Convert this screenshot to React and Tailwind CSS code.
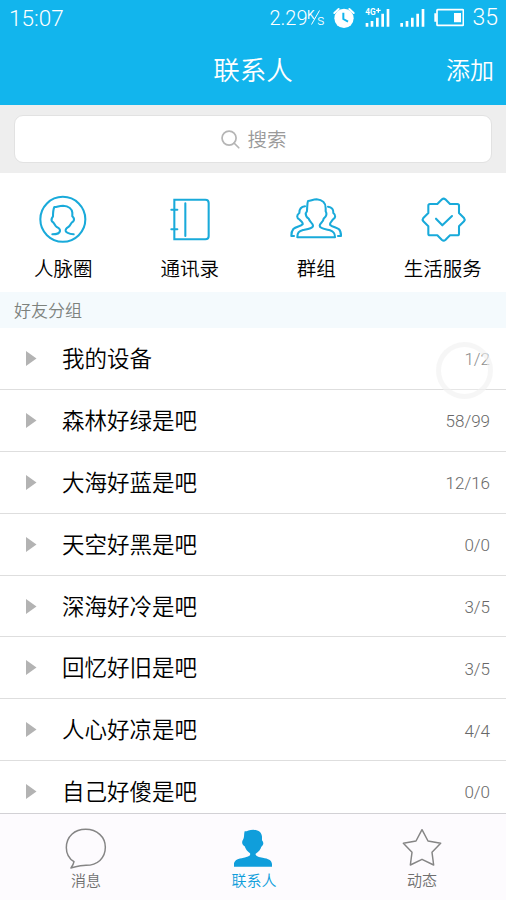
const groups = [
  { name: '我的设备', count: '1/2' },
  { name: '森林好绿是吧', count: '58/99' },
  { name: '大海好蓝是吧', count: '12/16' },
  { name: '天空好黑是吧', count: '0/0' },
  { name: '深海好冷是吧', count: '3/5' },
  { name: '回忆好旧是吧', count: '3/5' },
  { name: '人心好凉是吧', count: '4/4' },
  { name: '自己好傻是吧', count: '0/0' },
];

function StatusBar() {
  return (
    <div className="flex h-9 items-center pl-[9px] pr-[8px] font-[Roboto,sans-serif] font-light">
      <span className="text-[22.5px] leading-9">15:07</span>
      <span className="ml-auto text-[20px] leading-9">2.29</span>
      <svg className="mr-[7px]" width="18" height="36" viewBox="0 0 18 36" aria-hidden="true">
        <text x="0" y="18.5" fontSize="12" fontWeight="400" fill="#fff">K</text>
        <path d="M4.5 24.5L12.5 10.5" stroke="#fff" strokeWidth="1" />
        <text x="10" y="25" fontSize="15" fontWeight="300" fill="#fff">s</text>
      </svg>
      {/* Alarm */}
      <svg width="24" height="36" viewBox="123 0 72 108" fill="none">
        <circle cx="159" cy="55" r="29" fill="#fff" />
        <path d="M130 39L143 27M188 39L175 27" stroke="#fff" strokeWidth="6" strokeLinecap="round" />
        <path d="M157 38V57L171 65" stroke="#12b5ed" strokeWidth="6" />
      </svg>
      {/* Mobile data */}
      <svg className="ml-[9px]" width="26" height="36" viewBox="222 0 78 108" fill="#fff">
        <text x="223" y="46" fontSize="28" fontWeight="700" textLength="31" lengthAdjust="spacingAndGlyphs">4G</text>
        <path d="M255 29h5v-5h4v5h5v4h-5v5h-4v-5h-5z" />
        <path d="M224 69h8v11h-8zM239 63h8v17h-8zM255 53h8v27h-8zM271 41h8v39h-8zM287 27h8v53h-8z" />
      </svg>
      {/* Second sim */}
      <svg className="ml-[8px]" width="26" height="36" viewBox="324 0 78 108" fill="#fff">
        <path d="M328 69h8v11h-8zM344 63h8v17h-8zM360 53h8v27h-8zM376 41h8v39h-8zM392 27h8v53h-8z" />
      </svg>
      {/* Battery */}
      <svg className="ml-[8px]" width="31" height="36" viewBox="426 0 93 108" fill="none">
        <rect x="438" y="29" width="79" height="47" rx="2" stroke="#fff" strokeWidth="5" />
        <path d="M430 40h7v25h-7zM489 39h21v28h-21z" fill="#fff" />
      </svg>
      <span className="ml-[8px] text-[23px] leading-9">35</span>
    </div>
  );
}

function CircleIcon() {
  return (
    <svg width="54" height="50" viewBox="109 30 162 150" fill="none" stroke="#19aada" strokeWidth="6.2" strokeLinecap="round" strokeLinejoin="round">
      <circle cx="189.5" cy="103" r="67.5" />
      <path d="M158 148C168 148 180 145 181 138C182 131 177 129 171 126C164 121 165 114 157 109C153 103 156 99 160 94C160 84 160 75 164 66C174 66 177 62 190 62C208 63 217 73 218 83V94C223 99 225 105 220 110C213 113 213 122 206 126C201 129 197 131 198 138C200 145 213 147 222 148" />
    </svg>
  );
}

function BookIcon() {
  return (
    <svg width="54" height="50" viewBox="488 30 162 150" fill="none" stroke="#19aada" strokeWidth="6.2" strokeLinecap="round">
      <path d="M522 44H615Q625 44 625 54V154Q625 163 615 163H522Z" />
      <path d="M555 55V153M513 74H531M513 133H531" />
    </svg>
  );
}

function GroupIcon() {
  return (
    <svg width="54" height="50" viewBox="109 30 162 150" fill="none" stroke="#19aada" strokeWidth="6.2" strokeLinecap="round" strokeLinejoin="round">
      <path d="M134 157C134 143 138 139 151 135C166 132 181 130 181 122C181 115 172 113 168 101C164 99 159 92 159 85C161 82 164 80 163 76C164 66 163 56 166 48C175 48 180 43 192 43C210 44 219 55 219 69V79C223 86 221 95 213 101C212 112 201 114 201 122C201 130 216 132 232 136C244 140 247 145 247 157Z" />
      <path d="M157 64C146 65 140 71 140 84C131 90 132 99 140 103C144 108 152 113 150 118C144 124 130 125 122 132C117 138 116 145 116 153H124" />
      <path d="M226 65C237 66 243 74 242 84C251 91 248 99 241 103C238 109 230 113 232 119C239 126 252 127 259 133C264 138 265 145 265 153H256" />
    </svg>
  );
}

function BadgeIcon() {
  return (
    <svg width="54" height="50" viewBox="488 30 162 150" fill="none" stroke="#19aada" strokeWidth="6.2" strokeLinecap="round" strokeLinejoin="round">
      <path d="M566 43Q571 39 576 43L590 57H612Q617 57 617 62V84L632 99Q636 104 632 109L617 124V146Q617 151 612 151H590L576 165Q571 169 566 165L552 151H530Q525 151 525 146V124L510 109Q506 104 510 99L525 84V62Q525 57 530 57H552Z" />
      <path d="M548 101L567 121L596 93" />
    </svg>
  );
}

const shortcuts = [
  { label: '人脉圈', Icon: CircleIcon },
  { label: '通讯录', Icon: BookIcon },
  { label: '群组', Icon: GroupIcon },
  { label: '生活服务', Icon: BadgeIcon },
];

function TabBar() {
  return (
    <nav className="flex h-[87px] shrink-0 border-t border-[#d2d1d5] bg-[#fdfbfe] pl-[2px] text-[15px] leading-[17px] text-[#6f6f6f]">
      <a href="#messages" className="flex w-[168px] flex-col items-center pt-3">
        <svg width="54" height="45" viewBox="177 228 162 135" fill="none" stroke="#858585" strokeWidth="4.4" strokeLinejoin="round">
          <path d="M222 335C206 325 199 311 199 293C199 259 224 238 257 238C291 238 316 260 316 292C316 325 292 346 258 346C243 346 229 350 213 354C217 348 221 342 222 335Z" />
        </svg>
        <span>消息</span>
      </a>
      <a href="#contacts" className="flex w-[168px] flex-col items-center pt-3 text-[#109edb]">
        <svg width="54" height="45" viewBox="81 48 162 135" fill="#109edb">
          <path d="M102 170V160C104 149 115 146 131 143C144 140 153 137 150 130C142 124 137 118 134 109C126 104 125 97 128 91C134 84 131 74 134 64C142 64 148 59 160 59C176 60 185 67 186 80V91C192 97 191 105 184 110C182 119 175 125 167 131C165 138 177 141 188 143C205 146 215 150 216 162V170Z" />
        </svg>
        <span className="font-[350]">联系人</span>
      </a>
      <a href="#feed" className="flex w-[168px] flex-col items-center pt-3">
        <svg width="54" height="45" viewBox="417 228 162 135" fill="none" stroke="#858585" strokeWidth="4.4" strokeLinejoin="round">
          <path d="M498 239L516 273L554 280L528 307L533 345L498 328L463 345L468 307L442 280L480 273Z" />
        </svg>
        <span>动态</span>
      </a>
    </nav>
  );
}

export default function App() {
  return (
    <div className="relative flex h-[900px] w-[506px] flex-col overflow-hidden bg-white font-['Noto_Sans_CJK_SC',sans-serif] font-[350]">
      <header className="h-[105px] shrink-0 bg-[#12b5ed] text-white">
        <StatusBar />
        <div className="grid h-[66px] grid-cols-3 items-center px-[12px]">
          <h1 className="col-start-2 text-center text-[26.5px] leading-[40px] font-[350]">联系人</h1>
          <button className="text-right text-[24px] leading-[40px] font-[350]">添加</button>
        </div>
      </header>

      <div className="h-[68px] shrink-0 bg-[#eeeeee] px-[14px] pt-[10px]">
        <div className="flex h-[48px] items-center justify-center gap-[7px] rounded-[9px] border border-[#e2e2e2] bg-white pl-[2px] text-[19.5px] text-[#9a9a9a]">
          <svg width="19" height="19" viewBox="0 0 20 20" fill="none" stroke="#b5b5b5" strokeWidth="1.8" strokeLinecap="round">
            <circle cx="8.5" cy="8.5" r="7.4" />
            <path d="M13.7 13.7L18.7 18.7" />
          </svg>
          <span className="leading-[28px]">搜索</span>
        </div>
      </div>

      <div className="grid h-[119px] shrink-0 grid-cols-4 pt-[22px]">
        {shortcuts.map(({ label, Icon }) => (
          <a key={label} href="#" className="flex flex-col items-center">
            <Icon />
            <span className="mt-[9px] text-[19.5px] leading-[28px] text-black">{label}</span>
          </a>
        ))}
      </div>

      <h2 className="h-[36px] shrink-0 bg-[#f4fafd] pl-[14px] text-[17px] leading-[36px] font-[350] text-[#7d827d]">好友分组</h2>

      <ul className="min-h-0 flex-1 overflow-hidden">
        {groups.map((group) => (
          <li key={group.name} className="flex h-[61.9px] items-center border-b border-[#dedede] pr-[16px] pl-[26px]">
            <svg width="11" height="15" viewBox="0 0 11 15" fill="#b3b3b3">
              <path d="M0 0L10.5 7.5L0 15Z" />
            </svg>
            <span className="ml-[25px] pb-[3px] text-[22.5px] leading-[32px] text-black">{group.name}</span>
            <span className="ml-auto pt-[3px] font-[Roboto,sans-serif] text-[17px] font-light text-[#686868]">{group.count}</span>
          </li>
        ))}
      </ul>

      <TabBar />

      {/* Floating touch button */}
      <div className="absolute top-[342px] left-[436px] h-[57px] w-[57px] rounded-full border-[5px] border-[#f0f0f0]/60 bg-white/25" />
    </div>
  );
}
